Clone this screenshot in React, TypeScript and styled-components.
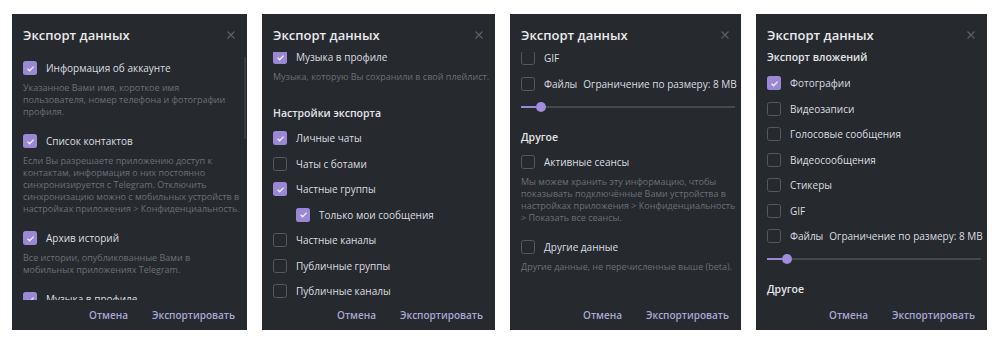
import React from 'react';
import styled, { createGlobalStyle } from 'styled-components';

// Styles
const GlobalStyle = createGlobalStyle`
  html,
  body {
    margin: 0;
    padding: 0;
    background: #fff;
  }

  body {
    font-family: 'Open Sans', 'Liberation Sans', sans-serif;
  }
`;

const Page = styled.div`
  display: flex;
  align-items: flex-start;
  gap: 15px;
  width: 1000px;
  height: 345px;
  padding: 14px 0 0 12px;
  box-sizing: border-box;
`;

const Dialog = styled.div<{ $width: number }>`
  position: relative;
  display: flex;
  flex-direction: column;
  width: ${(p) => p.$width}px;
  height: 316px;
  background: #26292e;
`;

const Header = styled.div`
  display: flex;
  align-items: center;
  justify-content: space-between;
  height: 38px;
  padding: 3px 12px 0 11px;
  box-sizing: border-box;
  flex-shrink: 0;

  .title {
    font-size: 13px;
    font-weight: 600;
    color: #e9eaec;
  }
`;

const Body = styled.div`
  flex: 1;
  overflow: hidden;
`;

const Content = styled.div<{ $offset: number }>`
  margin-top: ${(p) => p.$offset}px;
  padding: 0 6px 0 11px;
`;

const Section = styled.div`
  padding-bottom: 13px;
`;

const Row = styled.div<{ $indent?: boolean }>`
  display: flex;
  align-items: center;
  gap: 9px;
  height: 20px;
  margin-left: ${(p) => (p.$indent ? 23 : 0)}px;
  white-space: nowrap;
`;

const Box = styled.div<{ $checked: boolean }>`
  display: flex;
  align-items: center;
  justify-content: center;
  width: 14px;
  height: 14px;
  flex-shrink: 0;
  box-sizing: border-box;
  border-radius: 2.5px;
  background: ${(p) => (p.$checked ? '#9a88d4' : 'transparent')};
  border: ${(p) => (p.$checked ? 'none' : '1.5px solid #55595f')};
`;

const Label = styled.span<{ $bold?: boolean }>`
  font-size: 10px;
  font-weight: ${(p) => (p.$bold ? 500 : 400)};
  color: #dcdde0;
`;

const Limit = styled.span`
  margin-left: -3px;
  font-size: 10px;
  color: #dcdde0;
`;

const Desc = styled.div`
  margin-top: 4px;
  font-size: 9px;
  line-height: 12px;
  color: #6c7077;
  white-space: nowrap;
`;

const Subheader = styled.div<{ $top?: number }>`
  height: 20px;
  margin-top: ${(p) => p.$top || 0}px;
  line-height: 20px;
  font-size: 10.5px;
  font-weight: 600;
  color: #e4e5e8;
`;

const RowList = styled.div<{ $top?: number }>`
  display: flex;
  flex-direction: column;
  gap: 5.5px;
  margin-top: ${(p) => (p.$top === undefined ? 5 : p.$top)}px;
`;

const Slider = styled.div`
  display: flex;
  align-items: center;
  height: 10px;
  margin: 8px 0 15px;

  .fill {
    width: 15px;
    height: 2px;
    background: #9a88d4;
  }

  .thumb {
    width: 10px;
    height: 10px;
    border-radius: 50%;
    background: #a08ddb;
  }

  .rest {
    flex: 1;
    height: 2px;
    background: #45484d;
  }
`;

const Footer = styled.div`
  display: flex;
  align-items: center;
  justify-content: flex-end;
  gap: 24px;
  height: 30px;
  padding-right: 12px;
  flex-shrink: 0;
`;

const FooterButton = styled.button`
  padding: 0;
  border: none;
  background: none;
  font-family: inherit;
  font-size: 10px;
  font-weight: 600;
  color: #a9a7d3;
  cursor: pointer;
`;

const Scrollbar = styled.div`
  position: absolute;
  top: 43px;
  right: 1px;
  width: 2px;
  height: 82px;
  background: #383c41;
`;

// Parts
const CloseIcon = () => (
  <svg width="8" height="8" viewBox="0 0 8 8">
    <path d="M0.5 0.5L7.5 7.5M7.5 0.5L0.5 7.5" stroke="#5d6167" strokeWidth="1.2" />
  </svg>
);

const Check: React.FC<{ label: string; checked?: boolean; bold?: boolean; indent?: boolean; extra?: string }> = ({
  label,
  checked = false,
  bold,
  indent,
  extra,
}) => (
  <Row $indent={indent}>
    <Box $checked={checked}>
      {checked && (
        <svg width="9" height="9" viewBox="0 0 9 9">
          <polyline points="1.6,4.8 3.6,6.8 7.6,2.6" fill="none" stroke="#f1eefa" strokeWidth="1.3" />
        </svg>
      )}
    </Box>
    <Label $bold={bold}>{label}</Label>
    {extra && <Limit>{extra}</Limit>}
  </Row>
);

const Lines: React.FC<{ lines: string[] }> = ({ lines }) => (
  <Desc>
    {lines.map((l) => (
      <div key={l}>{l}</div>
    ))}
  </Desc>
);

const SizeSlider = () => (
  <Slider>
    <div className="fill" />
    <div className="thumb" />
    <div className="rest" />
  </Slider>
);

const ExportDialog: React.FC<{ width: number; offset: number; scroll?: boolean; children: React.ReactNode }> = ({
  width,
  offset,
  scroll,
  children,
}) => (
  <Dialog $width={width}>
    <Header>
      <span className="title">Экспорт данных</span>
      <CloseIcon />
    </Header>
    <Body>
      <Content $offset={offset}>{children}</Content>
    </Body>
    <Footer>
      <FooterButton>Отмена</FooterButton>
      <FooterButton>Экспортировать</FooterButton>
    </Footer>
    {scroll && <Scrollbar />}
  </Dialog>
);

const LIMIT = 'Ограничение по размеру: 8 MB';

const App: React.FC = () => {
  return (
    <Page>
      <GlobalStyle />

      <ExportDialog width={235} offset={6} scroll>
        <Section>
          <Check label="Информация об аккаунте" checked bold />
          <Lines
            lines={['Указанное Вами имя, короткое имя', 'пользователя, номер телефона и фотографии', 'профиля.']}
          />
        </Section>
        <Section>
          <Check label="Список контактов" checked bold />
          <Lines
            lines={[
              'Если Вы разрешаете приложению доступ к',
              'контактам, информация о них постоянно',
              'синхронизируется с Telegram. Отключить',
              'синхронизацию можно с мобильных устройств в',
              'настройках приложения > Конфиденциальность.',
            ]}
          />
        </Section>
        <Section>
          <Check label="Архив историй" checked bold />
          <Lines lines={['Все истории, опубликованные Вами в', 'мобильных приложениях Telegram.']} />
        </Section>
        <Check label="Музыка в профиле" checked bold />
      </ExportDialog>

      <ExportDialog width={233} offset={-5}>
        <Check label="Музыка в профиле" checked bold />
        <Lines lines={['Музыка, которую Вы сохранили в свой плейлист.']} />
        <Subheader $top={20}>Настройки экспорта</Subheader>
        <RowList>
          <Check label="Личные чаты" checked />
          <Check label="Чаты с ботами" />
          <Check label="Частные группы" checked />
          <Check label="Только мои сообщения" checked indent />
          <Check label="Частные каналы" />
          <Check label="Публичные группы" />
          <Check label="Публичные каналы" />
        </RowList>
      </ExportDialog>

      <ExportDialog width={231} offset={-4}>
        <RowList $top={0}>
          <Check label="GIF" />
          <Check label="Файлы" extra={LIMIT} />
        </RowList>
        <SizeSlider />
        <Subheader>Другое</Subheader>
        <RowList>
          <Section>
            <Check label="Активные сеансы" />
            <Lines
              lines={[
                'Мы можем хранить эту информацию, чтобы',
                'показывать подключённые Вами устройства в',
                'настройках приложения > Конфиденциальность',
                '> Показать все сеансы.',
              ]}
            />
          </Section>
        </RowList>
        <Check label="Другие данные" bold />
        <Lines lines={['Другие данные, не перечисленные выше (beta).']} />
      </ExportDialog>

      <ExportDialog width={231} offset={-5}>
        <Subheader>Экспорт вложений</Subheader>
        <RowList $top={6}>
          <Check label="Фотографии" checked />
          <Check label="Видеозаписи" />
          <Check label="Голосовые сообщения" />
          <Check label="Видеосообщения" />
          <Check label="Стикеры" />
          <Check label="GIF" />
          <Check label="Файлы" extra={LIMIT} />
        </RowList>
        <SizeSlider />
        <Subheader>Другое</Subheader>
      </ExportDialog>
    </Page>
  );
};

export default App;
